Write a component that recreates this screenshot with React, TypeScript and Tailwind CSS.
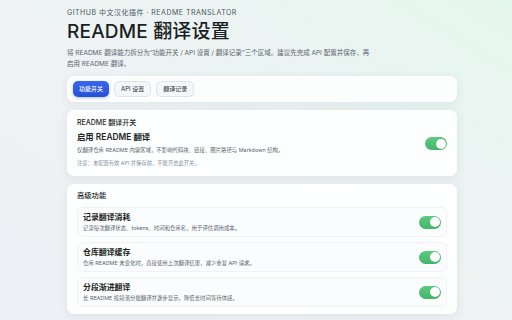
import { useState } from 'react'

const FONT = { fontFamily: 'Inter, "Noto Sans CJK SC", sans-serif' }

function Toggle({ on }: { on: boolean }) {
  return (
    <span
      className={`relative flex h-[13px] w-[22px] shrink-0 items-center rounded-full ${
        on ? 'bg-gradient-to-b from-[#5ccb80] to-[#43b56a]' : 'bg-gray-300'
      }`}
    >
      <span
        className={`absolute top-[1.5px] h-[10px] w-[10px] rounded-full bg-white shadow-[0_0_0_0.5px_rgba(0,0,0,0.08)] ${
          on ? 'right-[1.5px]' : 'left-[1.5px]'
        }`}
      />
    </span>
  )
}

const tabs = ['功能开关', 'API 设置', '翻译记录']

const advanced = [
  { title: '记录翻译消耗', desc: '记录每次翻译状态、tokens、时间和仓库名，用于评估调用成本。' },
  { title: '仓库翻译缓存', desc: '仓库 README 未变化时，直接使用上次翻译结果，减少重复 API 请求。' },
  { title: '分段渐进翻译', desc: '长 README 按段落分批翻译并逐步显示，降低长时间等待体感。' },
]

export default function App() {
  const [tab, setTab] = useState(0)

  return (
    <div
      className="h-[320px] w-[512px] overflow-hidden bg-gradient-to-tr from-[#edf0f4] via-[#eef2f4] to-[#e5f6ee] text-[#1b1f24]"
      style={FONT}
    >
      <div className="ml-[67px] w-[390px] pt-[9px]">
        {/* Header */}
        <p className="text-[7px] leading-[8px] tracking-[0.07em] text-[#4b5563]">
          GITHUB 中文汉化插件 · README TRANSLATOR
        </p>
        <h1 className="mt-[3px] text-[19px] font-medium leading-[24px] tracking-[0.01em]">
          README 翻译设置
        </h1>
        <p className="mt-[4px] text-[6.5px] leading-[11px] text-[#5b6470]">
          将 README 翻译能力拆分为“功能开关 / API 设置 / 翻译记录”三个区域。建议先完成 API 配置并保存，再
          <br />
          启用 README 翻译。
        </p>

        {/* Tabs */}
        <div className="mt-[6px] flex h-[26px] items-center gap-[5px] rounded-[7px] border border-white bg-white/85 px-[5px] shadow-[0_2px_8px_rgba(40,60,90,0.08)]">
          {tabs.map((t, i) => (
            <button
              key={t}
              onClick={() => setTab(i)}
              className={`h-[16px] rounded-[5px] px-[6px] text-[6px] leading-none ${
                tab === i
                  ? 'bg-gradient-to-b from-[#3a66ec] to-[#2550d6] font-medium text-white shadow-[0_1px_3px_rgba(37,80,214,0.35)]'
                  : 'border border-[#dfe4ea] bg-[#f4f6f9] text-[#2a2f36]'
              }`}
            >
              {t}
            </button>
          ))}
        </div>

        {/* README switch */}
        <section className="mt-[8px] h-[66px] rounded-[7px] border border-white bg-white/90 px-[9px] pt-[6px] shadow-[0_2px_8px_rgba(40,60,90,0.08)]">
          <h2 className="text-[7px] font-medium leading-[12px]">README 翻译开关</h2>
          <div className="mt-[2px] flex items-start justify-between">
            <div>
              <p className="text-[8.4px] font-semibold leading-[12px]">启用 README 翻译</p>
              <p className="mt-[1px] text-[5.4px] leading-[13px] text-[#5b6470]">
                仅翻译仓库 README 内容区域，不影响代码块、链接、图片路径与 Markdown 结构。
              </p>
              <p className="text-[5.3px] leading-[13px] text-[#8a929c]">
                注意：未配置有效 API 并保存前，不能开启此开关。
              </p>
            </div>
            <div className="mt-[6px] flex">
              <Toggle on />
            </div>
          </div>
        </section>

        {/* Advanced */}
        <section className="mt-[8px] rounded-[7px] border border-white bg-white/90 px-[9px] pb-[6px] pt-[5px] shadow-[0_2px_8px_rgba(40,60,90,0.08)]">
          <h2 className="text-[7.3px] font-medium leading-[12px]">高级功能</h2>
          <div className="mt-[5px] flex flex-col gap-[5px]">
            {advanced.map((a) => (
              <div
                key={a.title}
                className="flex h-[30px] items-center justify-between rounded-[6px] border border-[#f0f2f5] bg-[#fbfcfd] px-[5px]"
              >
                <div>
                  <p className="text-[7.9px] font-semibold leading-[11px]">{a.title}</p>
                  <p className="text-[5.4px] leading-[10px] text-[#5b6470]">{a.desc}</p>
                </div>
                <Toggle on />
              </div>
            ))}
          </div>
        </section>
      </div>
    </div>
  )
}
